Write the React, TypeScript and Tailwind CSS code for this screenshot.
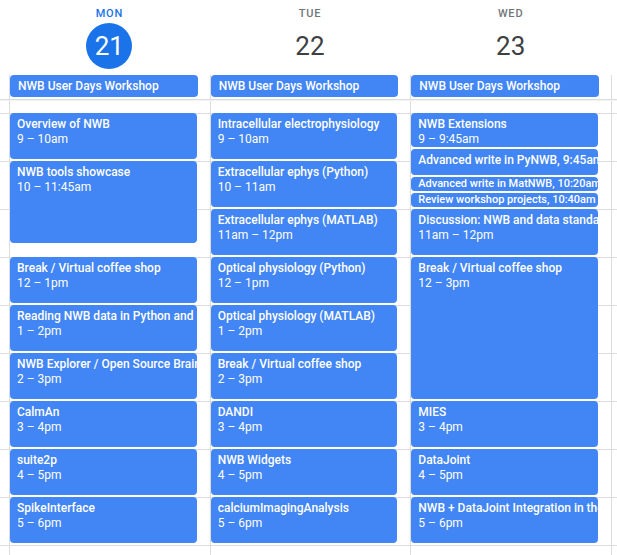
import React from 'react';

interface CalEvent {
  title: string;
  time: string;
  start: number;
  end: number;
}

interface Day {
  label: string;
  date: number;
  today?: boolean;
  events: CalEvent[];
}

const HOUR = 48;
const FIRST_HOUR = 9;
const TOP_PAD = 12;

const days: Day[] = [
  {
    label: 'MON',
    date: 21,
    today: true,
    events: [
      { title: 'Overview of NWB', time: '9 – 10am', start: 9, end: 10 },
      { title: 'NWB tools showcase', time: '10 – 11:45am', start: 10, end: 11.75 },
      { title: 'Break / Virtual coffee shop', time: '12 – 1pm', start: 12, end: 13 },
      { title: 'Reading NWB data in Python and MATLAB', time: '1 – 2pm', start: 13, end: 14 },
      { title: 'NWB Explorer / Open Source Brain', time: '2 – 3pm', start: 14, end: 15 },
      { title: 'CalmAn', time: '3 – 4pm', start: 15, end: 16 },
      { title: 'suite2p', time: '4 – 5pm', start: 16, end: 17 },
      { title: 'SpikeInterface', time: '5 – 6pm', start: 17, end: 18 },
    ],
  },
  {
    label: 'TUE',
    date: 22,
    events: [
      { title: 'Intracellular electrophysiology', time: '9 – 10am', start: 9, end: 10 },
      { title: 'Extracellular ephys (Python)', time: '10 – 11am', start: 10, end: 11 },
      { title: 'Extracellular ephys (MATLAB)', time: '11am – 12pm', start: 11, end: 12 },
      { title: 'Optical physiology (Python)', time: '12 – 1pm', start: 12, end: 13 },
      { title: 'Optical physiology (MATLAB)', time: '1 – 2pm', start: 13, end: 14 },
      { title: 'Break / Virtual coffee shop', time: '2 – 3pm', start: 14, end: 15 },
      { title: 'DANDI', time: '3 – 4pm', start: 15, end: 16 },
      { title: 'NWB Widgets', time: '4 – 5pm', start: 16, end: 17 },
      { title: 'calciumImagingAnalysis', time: '5 – 6pm', start: 17, end: 18 },
    ],
  },
  {
    label: 'WED',
    date: 23,
    events: [
      { title: 'NWB Extensions', time: '9 – 9:45am', start: 9, end: 9.75 },
      { title: 'Advanced write in PyNWB', time: '9:45am', start: 9.75, end: 10 + 20 / 60 },
      { title: 'Advanced write in MatNWB', time: '10:20am', start: 10 + 20 / 60, end: 10 + 40 / 60 },
      { title: 'Review workshop projects', time: '10:40am', start: 10 + 40 / 60, end: 11 },
      { title: 'Discussion: NWB and data standards', time: '11am – 12pm', start: 11, end: 12 },
      { title: 'Break / Virtual coffee shop', time: '12 – 3pm', start: 12, end: 15 },
      { title: 'MIES', time: '3 – 4pm', start: 15, end: 16 },
      { title: 'DataJoint', time: '4 – 5pm', start: 16, end: 17 },
      { title: 'NWB + DataJoint Integration in the lab', time: '5 – 6pm', start: 17, end: 18 },
    ],
  },
];

const hours = [9, 10, 11, 12, 13, 14, 15, 16, 17, 18];

function HourLines() {
  return (
    <>
      <div className="h-[12px]" />
      {hours.map((h) => (
        <div key={h} className="h-[48px] border-t border-[#dadce0]" />
      ))}
    </>
  );
}

function EventBlock({ ev }: { ev: CalEvent }) {
  const dur = ev.end - ev.start;
  const top = TOP_PAD + (ev.start - FIRST_HOUR) * HOUR;
  const height = dur * HOUR - 2;

  // short events put title and time on one line
  if (dur < 0.4) {
    return (
      <div
        className="absolute left-0 right-[13px] rounded-[4px] bg-[#4285f4] px-[7px] text-[11px] leading-[13px] font-medium text-white whitespace-nowrap overflow-hidden"
        style={{ top, height }}
      >
        {ev.title}, {ev.time}
      </div>
    );
  }
  if (dur < 0.7) {
    return (
      <div
        className="absolute left-0 right-[13px] rounded-[4px] bg-[#4285f4] px-[7px] pt-[4px] text-[12px] leading-[15px] font-medium text-white whitespace-nowrap overflow-hidden"
        style={{ top, height }}
      >
        {ev.title}, {ev.time}
      </div>
    );
  }
  return (
    <div
      className="absolute left-0 right-[13px] rounded-[4px] bg-[#4285f4] px-[7px] pt-[4px] text-[12px] leading-[15px] text-white whitespace-nowrap overflow-hidden"
      style={{ top, height }}
    >
      <div className="font-medium">{ev.title}</div>
      <div>{ev.time}</div>
    </div>
  );
}

export default function App() {
  return (
    <div className="h-[555px] w-[617px] overflow-hidden bg-white font-['Roboto','Liberation_Sans',sans-serif] text-[#3c4043]">
      {/* Day headers */}
      <div className="flex h-[75px]">
        <div className="w-[9px] shrink-0" />
        {days.map((d) => (
          <div key={d.label} className="w-[200.67px] shrink-0 flex flex-col items-center pt-[6px]">
            <div
              className={`h-4 text-[11px] leading-4 font-medium tracking-[0.8px] ${
                d.today ? 'text-[#1a73e8]' : 'text-[#70757a]'
              }`}
            >
              {d.label}
            </div>
            <div
              className={`mt-px flex h-[46px] w-[46px] items-center justify-center rounded-full text-[26px] ${
                d.today ? 'bg-[#1a73e8] text-white' : 'text-[#3c4043]'
              }`}
            >
              {d.date}
            </div>
          </div>
        ))}
      </div>

      {/* All-day row */}
      <div className="flex h-[25px] border-b border-[#dadce0]">
        <div className="w-[9px] shrink-0" />
        {days.map((d) => (
          <div key={d.label} className="w-[200.67px] shrink-0 border-l border-[#dadce0] pr-[12px]">
            <div className="h-[22px] rounded-[4px] bg-[#4285f4] pl-[8px] text-[12px] leading-[22px] font-medium text-white whitespace-nowrap overflow-hidden">
              NWB User Days Workshop
            </div>
          </div>
        ))}
        <div className="flex-1 border-l border-[#dadce0]" />
      </div>
      <div className="h-px bg-[#f1f3f4]" />

      {/* Time grid */}
      <div className="flex">
        <div className="w-[9px] shrink-0">
          <HourLines />
        </div>
        {days.map((d) => (
          <div key={d.label} className="relative w-[200.67px] shrink-0 border-l border-[#dadce0]">
            <HourLines />
            {d.events.map((ev) => (
              <EventBlock key={ev.title + ev.start} ev={ev} />
            ))}
          </div>
        ))}
        <div className="flex-1 border-l border-[#dadce0]">
          <HourLines />
        </div>
      </div>
    </div>
  );
}
